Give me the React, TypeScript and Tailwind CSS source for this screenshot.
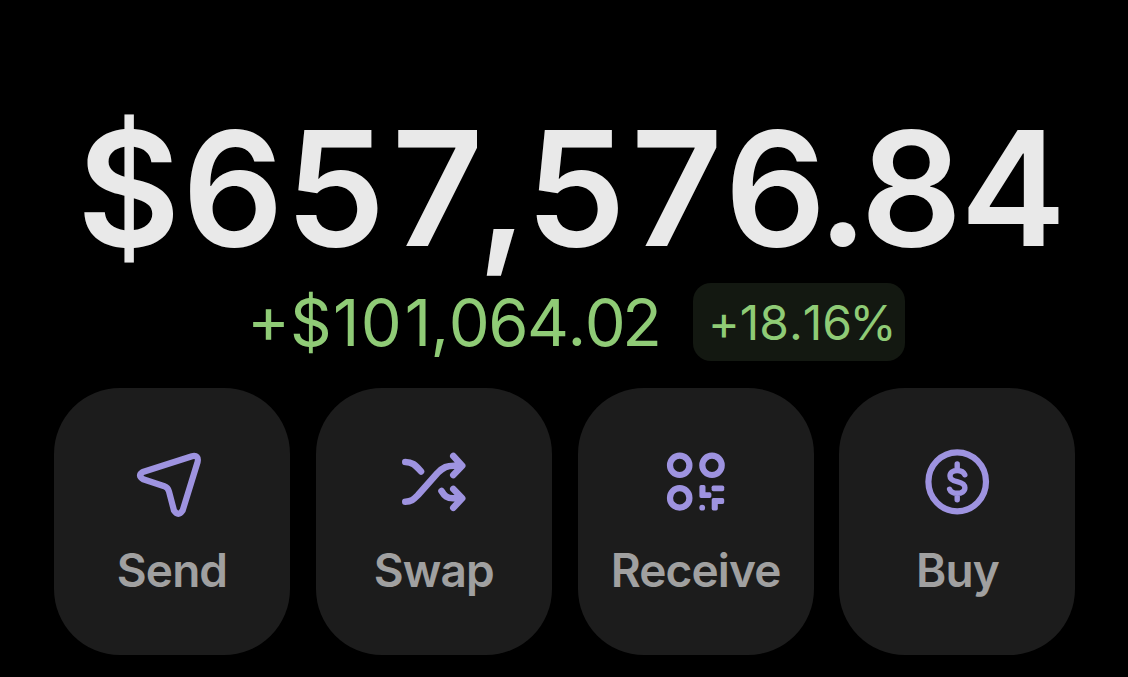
import type { ReactNode } from "react";

function Icon({ children }: { children: ReactNode }) {
  return (
    <svg
      viewBox="0 0 80 80"
      className="h-20 w-20 text-[#9e93e0]"
      fill="none"
      stroke="currentColor"
      strokeWidth={6.2}
      strokeLinecap="round"
      strokeLinejoin="round"
      aria-hidden="true"
    >
      {children}
    </svg>
  );
}

const actions = [
  {
    label: "Send",
    icon: (
      <Icon>
        <path d="M10.8 30 L60 14.2 Q67 12.8 65.6 20 L50.6 68.6 Q46.3 75 42 68.6 L37 49.5 Q36 45.6 32.3 44.2 L11.2 37.2 Q5 33.6 10.8 30Z" />
      </Icon>
    ),
  },
  {
    label: "Swap",
    icon: (
      <Icon>
        <path
          strokeWidth={6.6}
          d="M11.3 20C18 20 21 22.5 27 29.4M11.3 59.7C18 59.7 20 57 24 53L43.5 31C49.5 25 53 23.7 60 23.7H67M59.3 14L68.2 23.7L59.3 33M47.5 49C50.5 54 53 56.3 59 56.3H67M59.3 47L68.2 56.3L59.3 65.8"
        />
      </Icon>
    ),
  },
  {
    label: "Receive",
    icon: (
      <Icon>
        <g transform="translate(-0.8 0)">
          <circle cx="24.5" cy="23.3" r="9.7" />
          <circle cx="56.8" cy="23.3" r="9.7" />
          <circle cx="24.5" cy="55.9" r="9.7" />
          <g fill="currentColor" stroke="none">
            <path d="M46 43h2.6a1.7 1.7 0 0 1 1.7 1.7v5.6h4.2a1.7 1.7 0 0 1 1.7 1.7v2.3a1.7 1.7 0 0 1-1.7 1.7H45.9a1.7 1.7 0 0 1-1.7-1.7V44.7a1.7 1.7 0 0 1 1.7-1.7Z" />
            <rect x="56.4" y="43.4" width="12.6" height="5.9" rx="1.8" />
            <path d="M58.2 56h9.1a1.7 1.7 0 0 1 1.7 1.7v2.6a1.7 1.7 0 0 1-1.7 1.7h-4.7v4.7a1.7 1.7 0 0 1-1.7 1.7h-2.7a1.7 1.7 0 0 1-1.7-1.7V57.7a1.7 1.7 0 0 1 1.7-1.7Z" />
            <circle cx="47" cy="65.7" r="2.9" />
          </g>
        </g>
      </Icon>
    ),
  },
  {
    label: "Buy",
    icon: (
      <Icon>
        <ellipse cx="40.2" cy="39.8" rx="28.8" ry="29.5" />
        <path
          strokeWidth={5.4}
          d="M47.8 32.8C46.7 30 44.1 28.5 40.2 28.5C36 28.5 33 30.6 33 33.9C33 37.6 36.2 38.7 40.2 39.6C44.5 40.6 47.9 42 47.9 45.8C47.9 49.4 44.6 51.3 40.3 51.3C36.4 51.3 33.6 49.8 32.6 47.2M40.2 22V28.3M40.2 51.5V57.8"
        />
      </Icon>
    ),
  },
];

export default function App() {
  return (
    <main className="h-[677px] w-[1128px] overflow-hidden bg-black font-['Inter',sans-serif]">
      <h1 className="h-[283px] pt-[92px] pl-[77px] text-[159px] leading-[193px] font-semibold whitespace-nowrap text-[#e9e9e9] tabular-nums [font-kerning:none]">
        <span className="tracking-[1px]">$6</span>
        <span className="tracking-[-2px]">5</span>
        <span className="tracking-[-8px]">7</span>
        <span className="tracking-[2px]">,</span>
        <span className="tracking-[-3px]">5</span>
        <span className="tracking-[-4.5px]">7</span>
        <span className="tracking-[-5.5px]">6</span>
        <span className="tracking-[-4px]">.</span>
        <span className="tracking-[-1px]">8</span>
        <span className="tracking-[-1px]">4</span>
      </h1>
      <div className="flex h-[78px] items-center pl-[247px] text-[#8fcb76] [font-kerning:none]">
        <span className="flex w-[446px] text-[65px] leading-[65px] whitespace-nowrap">
          <span className="-mt-[3px]">+</span>
          <span className="tracking-[1.3px]">$1</span>
          <span className="tracking-[3px]">0</span>
          <span className="tracking-[-0.6px]">1,</span>
          <span className="tracking-[-1.5px]">064.</span>
          <span className="tracking-[-3.5px]">0</span>
          <span>2</span>
        </span>
        <span className="h-[78px] w-[212px] rounded-[18px] bg-[#131811] pl-[15px] text-[48px] leading-[80px] whitespace-nowrap [font-feature-settings:'calt'_0]">
          +18.1<span className="tracking-[-2.5px]">6%</span>
        </span>
      </div>
      <nav className="flex gap-[25.8px] pt-[27px] pl-[54px]">
        {actions.map(({ label, icon }) => (
          <button
            key={label}
            type="button"
            className="flex h-[267px] w-[236px] shrink-0 flex-col items-center rounded-[66px] bg-[#1c1c1c] pt-[54px]"
          >
            {icon}
            <span className="mt-[20px] text-[46px] leading-[56px] font-semibold tracking-[-0.9px] text-[#a0a0a0]">{label}</span>
          </button>
        ))}
      </nav>
    </main>
  );
}
